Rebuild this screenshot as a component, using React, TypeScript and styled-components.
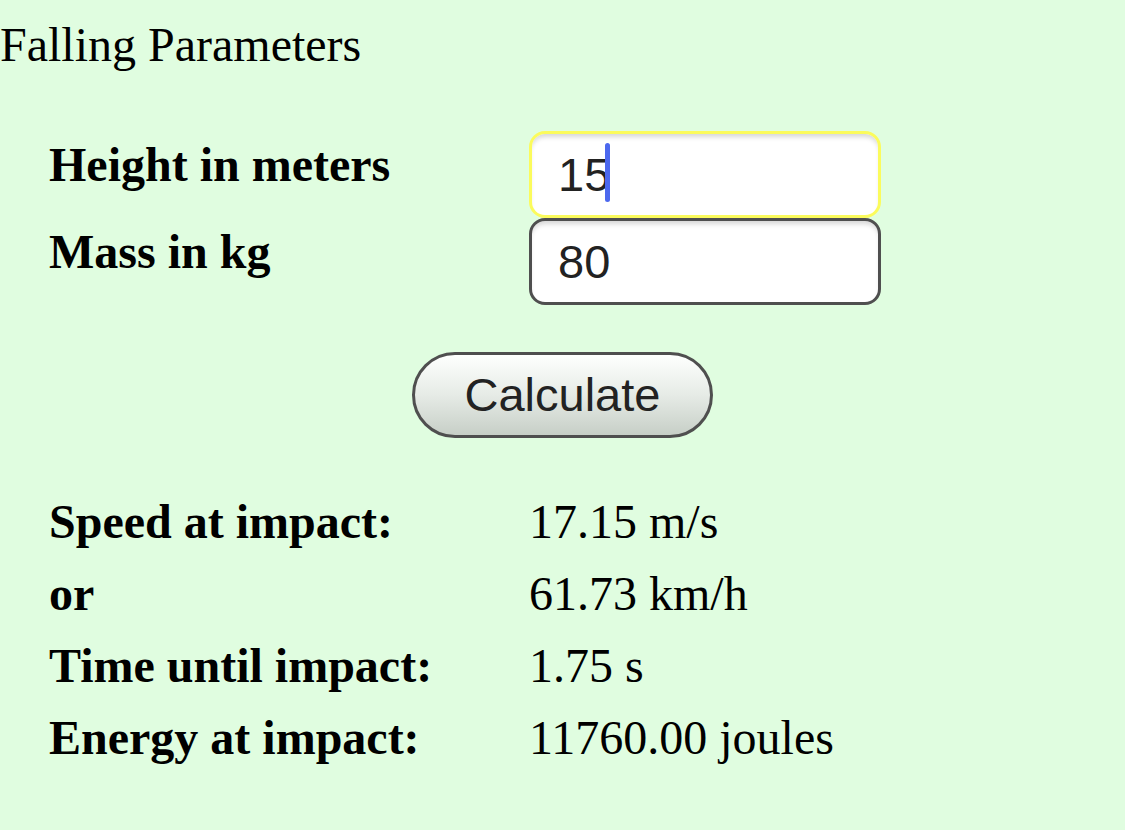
import styled, { createGlobalStyle } from 'styled-components';

const GlobalStyle = createGlobalStyle`
    html, body {
        margin: 0;
        padding: 0;
        background: #e0fde0;
    }
    body {
        font-family: 'Liberation Serif', 'Times New Roman', serif;
        color: #000;
        min-height: 830px;
    }
`;

const results = [
    { label: 'Speed at impact:', value: '17.15 m/s' },
    { label: 'or', value: '61.73 km/h' },
    { label: 'Time until impact:', value: '1.75 s' },
    { label: 'Energy at impact:', value: '11760.00 joules' },
];

const App = () => {
    return (
        <>
            <GlobalStyle />
            <Page>
                <Title>Falling Parameters</Title>
                <Form>
                    <Label>Height in meters</Label>
                    <Field>
                        <Input focused readOnly value='15' />
                        <Caret />
                    </Field>
                    <Label>Mass in kg</Label>
                    <Field>
                        <Input readOnly value='80' />
                    </Field>
                </Form>
                <Button type='button'>Calculate</Button>
                <Results>
                    {results.map((row) => (
                        <Row key={row.label}>
                            <ResultLabel>{row.label}</ResultLabel>
                            <Value>{row.value}</Value>
                        </Row>
                    ))}
                </Results>
            </Page>
        </>
    );
};

const Page = styled.div`
    width: 1125px;
    height: 830px;
    overflow: hidden;
`;

const Title = styled.div`
    font-size: 48px;
    line-height: 55px;
    padding-top: 17px;
`;

const Form = styled.div`
    display: grid;
    grid-template-columns: 480px 352px;
    grid-auto-rows: 87px;
    margin: 59px 0 0 49px;
`;

const Label = styled.div`
    font-size: 48px;
    font-weight: bold;
    line-height: 55px;
    padding-top: 6px;
`;

const Field = styled.div`
    position: relative;
    height: 87px;
`;

const Input = styled.input<{ focused?: boolean }>`
    box-sizing: border-box;
    width: 352px;
    height: 87px;
    margin: 0;
    padding: 0 0 0 26px;
    border: 3px solid ${(p) => (p.focused ? '#fbfb5c' : '#4f4f4f')};
    border-radius: 16px;
    background: #fff;
    box-shadow: inset 0 5px 5px -2px rgba(0, 0, 0, 0.16);
    font-family: 'Liberation Sans', Arial, sans-serif;
    font-size: 47px;
    color: #222;
    outline: none;
    caret-color: transparent;
`;

const Caret = styled.span`
    position: absolute;
    left: 76px;
    top: 12px;
    width: 5px;
    height: 59px;
    border-radius: 3px;
    background: #4c68ee;
`;

const Button = styled.button`
    display: block;
    box-sizing: border-box;
    width: 301px;
    height: 86px;
    margin: 47px auto 0;
    padding: 0 0 2px;
    border: 3px solid #4f4f4f;
    border-radius: 43px;
    background: linear-gradient(#fefffe, #e6ebe6 50%, #c7cfc7);
    font-family: 'Liberation Sans', Arial, sans-serif;
    font-size: 47px;
    color: #222;
`;

const Results = styled.div`
    margin: 48px 0 0 49px;
`;

const Row = styled.div`
    display: grid;
    grid-template-columns: 480px 1fr;
    height: 72px;
    font-size: 48px;
    line-height: 72px;
`;

const ResultLabel = styled.div`
    font-weight: bold;
`;

const Value = styled.div``;

export default App;
